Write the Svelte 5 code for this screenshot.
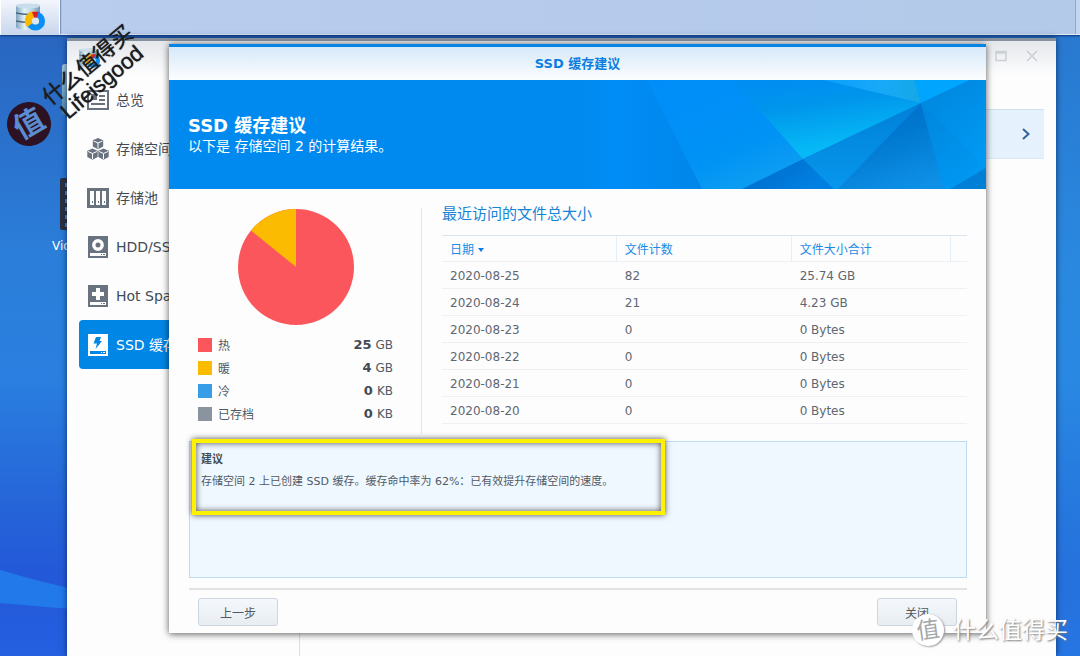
<script>
  let menu = [
    { id: "overview", label: "总览" },
    { id: "volume", label: "存储空间" },
    { id: "pool", label: "存储池" },
    { id: "disk", label: "HDD/SSD" },
    { id: "spare", label: "Hot Spare" },
    { id: "cache", label: "SSD 缓存" },
  ];
  let selected = "cache";

  let legend = [
    { name: "热", value: 25, unit: "GB", color: "#fb565b" },
    { name: "暖", value: 4, unit: "GB", color: "#fabb00" },
    { name: "冷", value: 0, unit: "KB", color: "#379de6" },
    { name: "已存档", value: 0, unit: "KB", color: "#8a949f" },
  ];

  let rows = [
    { date: "2020-08-25", count: 82, size: "25.74 GB" },
    { date: "2020-08-24", count: 21, size: "4.23 GB" },
    { date: "2020-08-23", count: 0, size: "0 Bytes" },
    { date: "2020-08-22", count: 0, size: "0 Bytes" },
    { date: "2020-08-21", count: 0, size: "0 Bytes" },
    { date: "2020-08-20", count: 0, size: "0 Bytes" },
  ];
</script>

{#snippet storageLogo()}
  <svg class="logo" viewBox="0 0 30 28" aria-hidden="true">
    <defs>
      <linearGradient id="cyl" x1="0" x2="1" y1="0" y2="0">
        <stop offset="0" stop-color="#7fa3bd" />
        <stop offset="0.35" stop-color="#e3f1f8" />
        <stop offset="0.7" stop-color="#b3cfe0" />
        <stop offset="1" stop-color="#6f97b4" />
      </linearGradient>
    </defs>
    <path d="M0 3C0 0 24 0 24 3V24C24 28 0 28 0 24Z" fill="url(#cyl)" />
    <ellipse cx="12" cy="3" rx="12" ry="2.4" fill="#c9deea" />
    <path
      d="M0 10Q12 13 24 10M0 18Q12 21 24 18"
      fill="none"
      stroke="#47677f"
      stroke-width="1.3"
    />
    <circle cx="19.500" cy="18" r="6.600" fill="none" stroke="#0c8ff5" stroke-width="6" />
    <path d="M19.500 18V8.400A9.600 9.600 0 0 0 11 24Z" fill="#fbb800" />
    <path d="M19.500 18L16 9L22.500 8.800Z" fill="#e6182b" />
    <circle cx="19.500" cy="18" r="3.600" fill="#dbe8f4" />
  </svg>
{/snippet}

<div class="desktop">
  <svg class="wave" viewBox="0 0 1080 90" preserveAspectRatio="none" aria-hidden="true">
    <path d="M0 4Q60 22 120 32L1080 90H700Q120 48 0 37Z" fill="#2279ea" />
  </svg>

  <div class="taskbar">
    <button class="task" aria-label="存储空间管理员">{@render storageLogo()}</button>
    <span class="task-end"></span>
  </div>

  <div class="shortcut drive"></div>
  <div class="shortcut video">
    <svg viewBox="0 0 64 52" aria-hidden="true">
      <rect width="64" height="52" rx="2" fill="#2b3140" />
      <path d="M7 5V50" stroke="#5a88c0" stroke-width="4" stroke-dasharray="4 4" />
    </svg>
    <span>Video</span>
  </div>

  <div class="window">
    <header>
      {@render storageLogo()}
      <div class="controls">
        <button aria-label="最大化">
          <svg viewBox="0 0 12 12"><path d="M1 1.500H11V10.500H1ZM1 3H11" /></svg>
        </button>
        <button aria-label="关闭窗口">
          <svg viewBox="0 0 12 12"><path d="M1 1L11 11M11 1L1 11" /></svg>
        </button>
      </div>
    </header>
    <div class="window-body">
      <nav>
        {#each menu as item}
          <button
            class="item"
            class:active={item.id === selected}
            on:click={() => (selected = item.id)}
          >
            <svg viewBox="0 0 22 22" fill="currentColor" aria-hidden="true">
              {#if item.id === "overview"}
                <path
                  fill-rule="evenodd"
                  d="M0 1H22V21H0ZM2 3V19H20V3ZM4 5H10V11H4ZM12 6H18V8H12ZM12 10H18V12H12ZM4 14H18V16H4Z"
                />
              {:else if item.id === "volume"}
                {#each ["11 0", "5.500 10.500", "16.500 10.500"] as spot}
                  <g transform="translate({spot})">
                    <path d="M0 0L5.200 2.300V8.500L0 11.200L-5.200 8.500V2.300Z" />
                    <path
                      d="M-4.400 3L0 5L4.400 3M0 5V10.500"
                      fill="none"
                      stroke="#fff"
                      stroke-width="1"
                    />
                  </g>
                {/each}
              {:else if item.id === "pool"}
                <path
                  fill-rule="evenodd"
                  d="M0 1H22V21H0ZM3 4V18H7V4ZM9 4V18H13V4ZM15 4V18H19V4Z"
                />
                <path d="M5 14H6V16H5ZM11 14H12V16H11ZM17 14H18V16H17Z" />
              {:else}
                <path fill-rule="evenodd" d="M1 0H21V22H1ZM3 17V20H19V17Z" />
                <path d="M14 18H15V19H14ZM16 18H18V19H16Z" />
                {#if item.id === "disk"}
                  <circle cx="11" cy="9" r="4.200" fill="none" stroke="#fff" stroke-width="3.400" />
                {:else if item.id === "spare"}
                  <path d="M9 3H13V7H17V11H13V15H9V11H5V7H9Z" fill="#fff" />
                {:else}
                  <path d="M9 3H14L12.500 7H15L8.500 15L10 9.500H6.500Z" fill="#0086e5" />
                {/if}
              {/if}
            </svg>
            {item.label}
          </button>
        {/each}
      </nav>
      <main>
        <button class="next" aria-label="下一个">
          <svg viewBox="0 0 8 12"><path d="M1 1L6.500 6L1 11" /></svg>
        </button>
      </main>
    </div>
  </div>

  <div class="dialog" role="dialog" aria-labelledby="dialog-title">
    <div class="titlebar" id="dialog-title">SSD 缓存建议</div>
    <div class="banner">
      <svg viewBox="0 0 406 109" aria-hidden="true">
        <defs>
          <linearGradient id="b1" x1="0" x2="1" y1="0" y2="0">
            <stop offset="0" stop-color="#008af0" />
            <stop offset="0.300" stop-color="#008df6" />
            <stop offset="1" stop-color="#0086ea" />
          </linearGradient>
          <linearGradient id="b2" x1="0" x2="0.600" y1="0" y2="1">
            <stop offset="0" stop-color="#008dfa" />
            <stop offset="0.700" stop-color="#0092f5" />
            <stop offset="1" stop-color="#0c9df2" />
          </linearGradient>
          <linearGradient id="b3" x1="0.300" x2="0.600" y1="0" y2="0.900">
            <stop offset="0" stop-color="#008ef2" />
            <stop offset="0.350" stop-color="#0096ec" />
            <stop offset="0.900" stop-color="#06b8f6" />
          </linearGradient>
          <linearGradient id="b4" x1="0" x2="1" y1="0" y2="0">
            <stop offset="0" stop-color="#0a9ffc" />
            <stop offset="0.600" stop-color="#19a9f8" />
            <stop offset="1" stop-color="#14a8e6" />
          </linearGradient>
          <linearGradient id="b5" x1="0" x2="1" y1="0" y2="0.500">
            <stop offset="0" stop-color="#0068c8" />
            <stop offset="1" stop-color="#0081e2" />
          </linearGradient>
          <linearGradient id="b6" x1="0" x2="0" y1="0" y2="1">
            <stop offset="0" stop-color="#0080d8" />
            <stop offset="1" stop-color="#0797ec" />
          </linearGradient>
          <linearGradient id="b7" x1="0.300" x2="0.700" y1="0" y2="1">
            <stop offset="0" stop-color="#006fca" />
            <stop offset="0.400" stop-color="#0078d0" />
            <stop offset="1" stop-color="#0e90e6" />
          </linearGradient>
          <linearGradient id="b8" x1="0" x2="0.600" y1="0" y2="1">
            <stop offset="0" stop-color="#0085dc" />
            <stop offset="1" stop-color="#0098f2" />
          </linearGradient>
        </defs>
        <path d="M0 0H67L122 109H0Z" fill="url(#b1)" />
        <path d="M67 0H153L224 79L162 109H122Z" fill="url(#b2)" />
        <path d="M153 0H243L341 23L223 79Z" fill="url(#b3)" />
        <path d="M243 0H335L341 23Z" fill="url(#b4)" />
        <path d="M335 0H390L341 23Z" fill="#00a5fd" />
        <path d="M162 109L223 79L254 109Z" fill="url(#b5)" />
        <path d="M223 79L341 23L258 109H254Z" fill="url(#b6)" />
        <path d="M341 23L258 109H364Z" fill="url(#b7)" />
        <path d="M341 23L364 109H370L406 88V87Z" fill="url(#b8)" />
        <path d="M390 0H406V87L341 23Z" fill="url(#b8)" />
        <path d="M406 88V109H370Z" fill="#007fd6" />
      </svg>
      <h1>SSD 缓存建议</h1>
      <p>以下是 存储空间 2 的计算结果。</p>
    </div>

    <div class="content">
      <div class="stats">
        <section class="usage">
          <svg class="pie" viewBox="0 0 116 116" aria-hidden="true">
            <circle cx="58" cy="58" r="58" fill="#fb565b" />
            <path d="M58 58V0A58 58 0 0 0 13 21.500Z" fill="#fabb00" />
          </svg>
          <ul>
            {#each legend as entry}
              <li>
                <span class="swatch" style="background: {entry.color}"></span>
                <span class="name">{entry.name}</span>
                <b>{entry.value}</b>
                <span class="unit">{entry.unit}</span>
              </li>
            {/each}
          </ul>
        </section>
        <section class="recent">
          <h2>最近访问的文件总大小</h2>
          <table>
            <thead>
              <tr>
                <th>日期<i class="caret"></i></th>
                <th>文件计数</th>
                <th>文件大小合计</th>
                <th class="filler"></th>
              </tr>
            </thead>
            <tbody>
              {#each rows as row}
                <tr>
                  <td>{row.date}</td>
                  <td>{row.count}</td>
                  <td colspan="2">{row.size}</td>
                </tr>
              {/each}
            </tbody>
          </table>
        </section>
      </div>

      <div class="advice">
        <h3>建议</h3>
        <p>存储空间 2 上已创建 SSD 缓存。缓存命中率为 62%：已有效提升存储空间的速度。</p>
        <div class="marker"></div>
      </div>

      <footer>
        <button>上一步</button>
        <button>关闭</button>
      </footer>
    </div>
  </div>

  <div class="stamp">
    <span class="seal">值</span>
    <div class="stamp-text">
      <span>什么值得买</span>
      <span>Lifeisgood</span>
    </div>
  </div>
  <div class="brand"><span class="coin">值</span><span>什么值得买</span></div>
</div>

<style>
  :global(body) {
    margin: 0;
    overflow: hidden;
  }
  .desktop {
    position: relative;
    height: 100vh;
    overflow: hidden;
    font-family: "DejaVu Sans", "Noto Sans CJK SC", sans-serif;
    font-size: 12px;
    color: #505a64;
    background:
      linear-gradient(90deg, transparent 10%, rgba(40, 150, 230, 0.4) 98%),
      linear-gradient(
        #2862bc 0,
        #2a6fca 18%,
        #2b7fda 40%,
        #2a7fe0 58%,
        #2563d8 78%,
        #2358d8 88%,
        #2460e0 100%
      );
  }
  button {
    font: inherit;
    color: inherit;
    border: 0;
    padding: 0;
    background: none;
    cursor: pointer;
  }
  h1,
  h2,
  h3,
  p,
  ul {
    margin: 0;
    padding: 0;
  }
  .wave {
    position: absolute;
    left: 0;
    bottom: 0;
    width: 100%;
    height: 90px;
  }

  .taskbar {
    position: relative;
    display: flex;
    justify-content: space-between;
    height: 34px;
    background: linear-gradient(90deg, #b9cdee, #b4cae9);
    border-bottom: 1px solid #dfeaf8;
    box-shadow: 0 1px 2px #0d3577;
  }
  .task {
    width: 60px;
    border-left: 1px solid #fff;
    border-right: 1px solid #fff;
    background: linear-gradient(#f3f6fc, #c9d7ee);
    box-shadow: 1px 0 1px #7d93b8;
  }
  .task .logo {
    display: block;
    width: 30px;
    height: 28px;
    margin-left: 15px;
  }
  .task-end {
    width: 4px;
    border-left: 1px solid #8fa9cf;
    background: #c3d5ef;
  }

  .shortcut {
    position: absolute;
    left: 60px;
    width: 64px;
  }
  .drive {
    top: 64px;
    left: 62px;
    height: 51px;
    border-radius: 3px;
    background: linear-gradient(#a9cbe0, #4f88ad);
  }
  .video {
    top: 178px;
    left: 52px;
    display: flex;
    flex-direction: column;
    gap: 9px;
    color: #fff;
  }
  .video svg {
    width: 64px;
    height: 52px;
    margin-left: 8px;
  }

  .window {
    position: absolute;
    top: 38px;
    left: 67px;
    right: 24px;
    bottom: 0;
    display: flex;
    flex-direction: column;
    background: #fdfdfe;
    border-top: 3px solid #86919e;
    box-shadow: 0 0 6px rgba(0, 20, 60, 0.7);
  }
  .window header {
    display: flex;
    justify-content: space-between;
    align-items: center;
    height: 34px;
    padding: 0 18px 0 12px;
    background: linear-gradient(#e4e7eb, #fdfdfe);
  }
  .window header .logo {
    width: 22px;
    height: 20px;
  }
  .controls {
    display: flex;
    gap: 19px;
    padding-bottom: 4px;
  }
  .controls svg {
    display: block;
    width: 12px;
    height: 12px;
    fill: none;
    stroke: #cbd0d5;
    stroke-width: 1.5;
  }
  .window-body {
    display: flex;
    flex: 1;
  }
  nav {
    box-sizing: border-box;
    width: 233px;
    padding: 0 12px;
    border-right: 1px solid #dcdfe2;
  }
  .item {
    display: flex;
    align-items: center;
    gap: 7px;
    width: 100%;
    height: 49px;
    padding-left: 8px;
    border-radius: 4px;
    font-size: 14px;
    line-height: 20px;
    color: #414b55;
  }
  .item svg {
    width: 22px;
    height: 22px;
    color: #68737f;
  }
  .item.active,
  .item.active svg {
    color: #fff;
  }
  .item.active {
    background: #0086e5;
  }
  main {
    flex: 1;
    padding: 34px 12px 0 12px;
  }
  .next {
    display: flex;
    align-items: center;
    justify-content: flex-end;
    box-sizing: border-box;
    width: 100%;
    height: 50px;
    padding-right: 14px;
    background: #e5f2fe;
    border-top: 1px solid #cfe0ee;
    border-bottom: 1px solid #dbe9f5;
  }
  .next svg {
    width: 8px;
    height: 12px;
    fill: none;
    stroke: #33639c;
    stroke-width: 2;
  }

  .dialog {
    position: absolute;
    top: 44px;
    left: 169px;
    right: 94px;
    background: #fdfdfe;
    border-top: 3px solid #0885e2;
    box-shadow: 0 1px 7px rgba(0, 0, 0, 0.65);
  }
  .titlebar {
    height: 33px;
    line-height: 34px;
    text-align: center;
    font-size: 13px;
    font-weight: bold;
    color: #0b7edf;
    background: linear-gradient(#d6e9f9, #fcfdff);
  }
  .banner {
    position: relative;
    box-sizing: border-box;
    height: 109px;
    padding: 35px 19px 0 19px;
    color: #fff;
    background: #008af0;
  }
  .banner svg {
    position: absolute;
    top: 0;
    right: 0;
    height: 109px;
  }
  h1 {
    position: relative;
    font-size: 18px;
    line-height: 22px;
  }
  .banner p {
    position: relative;
    font-size: 14px;
    line-height: 18px;
  }
  .content {
    padding: 19px 19px 7px 20px;
  }
  .stats {
    display: flex;
    gap: 20px;
  }
  .usage {
    box-sizing: border-box;
    width: 233px;
    height: 226px;
    padding: 1px 28px 0 9px;
    border-right: 1px solid #dfe8f1;
  }
  .pie {
    display: block;
    width: 116px;
    height: 116px;
    margin: 0 auto 8px 40px;
  }
  ul {
    list-style: none;
  }
  li {
    display: flex;
    align-items: center;
    height: 23px;
  }
  .swatch {
    width: 14px;
    height: 14px;
    margin-right: 6px;
  }
  .name {
    flex: 1;
  }
  li b {
    font-size: 13px;
    margin-right: 4px;
    color: #414b55;
  }
  .recent {
    flex: 1;
  }
  h2 {
    height: 27px;
    line-height: 13px;
    font-size: 15px;
    font-weight: normal;
    color: #1583d6;
  }
  table {
    width: 100%;
    table-layout: fixed;
    border-collapse: separate;
    border-spacing: 0;
    border-top: 1px solid #d8e4ef;
  }
  th,
  td {
    box-sizing: border-box;
    height: 27px;
    padding: 1px 0 0 8px;
    line-height: 18px;
    text-align: left;
    border-bottom: 1px solid #ecf1f5;
  }
  td {
    color: #5d6771;
  }
  th {
    height: 26px;
    padding-top: 2px;
    font-weight: normal;
    color: #1a8be6;
    border-right: 1px solid #e4eef7;
  }
  th.filler {
    width: 16px;
    padding: 0;
    border-right: 0;
  }
  .caret {
    display: inline-block;
    margin-left: 4px;
    vertical-align: 2px;
    border: 3px solid transparent;
    border-top: 4px solid #0b7edf;
    border-bottom: 0;
  }
  th:nth-child(1),
  th:nth-child(2) {
    width: 33.3%;
  }

  .advice {
    position: relative;
    box-sizing: border-box;
    height: 137px;
    margin-top: 7px;
    padding: 8px 11px;
    font-size: 11px;
    background: #f0f8ff;
    border: 1px solid #bcdcf2;
  }
  h3 {
    font-size: 11px;
    line-height: 20px;
    color: #414b55;
  }
  .advice p {
    padding-top: 2px;
    line-height: 20px;
  }
  .marker {
    position: absolute;
    box-sizing: border-box;
    top: -3px;
    left: 2px;
    width: 61%;
    height: 76px;
    border: 4px solid #fff200;
    box-shadow:
      0 0 6px rgba(0, 0, 0, 0.7),
      inset 0 0 6px rgba(0, 0, 0, 0.7);
  }
  footer {
    display: flex;
    justify-content: space-between;
    margin-top: 10px;
    padding: 8px 10px 0 9px;
    border-top: 2px solid #e2e2e4;
  }
  footer button {
    box-sizing: border-box;
    width: 80px;
    height: 28px;
    border: 1px solid #ccd5e0;
    border-radius: 3px;
    background: linear-gradient(#f4f8fc, #e8edf2);
  }

  .stamp {
    position: absolute;
    top: 20px;
    left: 7px;
    width: 160px;
    height: 130px;
    pointer-events: none;
  }
  .seal {
    position: absolute;
    left: 0;
    top: 82px;
    width: 44px;
    height: 44px;
    line-height: 44px;
    border-radius: 50%;
    text-align: center;
    font-size: 30px;
    font-weight: bold;
    color: #5b8bd0;
    background: #2c1222;
    transform: rotate(-30deg);
  }
  .stamp-text {
    position: absolute;
    left: 28px;
    top: 32px;
    width: 120px;
    display: flex;
    flex-direction: column;
    align-items: center;
    font-family: "Liberation Sans", "Noto Sans CJK SC", sans-serif;
    font-size: 22px;
    line-height: 22px;
    color: #1b1b20;
    text-shadow: 0 0 1px #1b1b20;
    transform: rotate(-40deg);
  }
  .brand {
    position: absolute;
    right: 12px;
    bottom: 10px;
    display: flex;
    align-items: center;
    gap: 9px;
    font-size: 23px;
    line-height: 32px;
    color: #fff;
    text-shadow: 1px 1px 2px #777;
    pointer-events: none;
  }
  .coin {
    width: 32px;
    height: 32px;
    border-radius: 50%;
    text-align: center;
    color: #a4a8ac;
    background: #fff;
    box-shadow: 1px 1px 2px #999;
    text-shadow: none;
    transform: rotate(-8deg);
  }
</style>
